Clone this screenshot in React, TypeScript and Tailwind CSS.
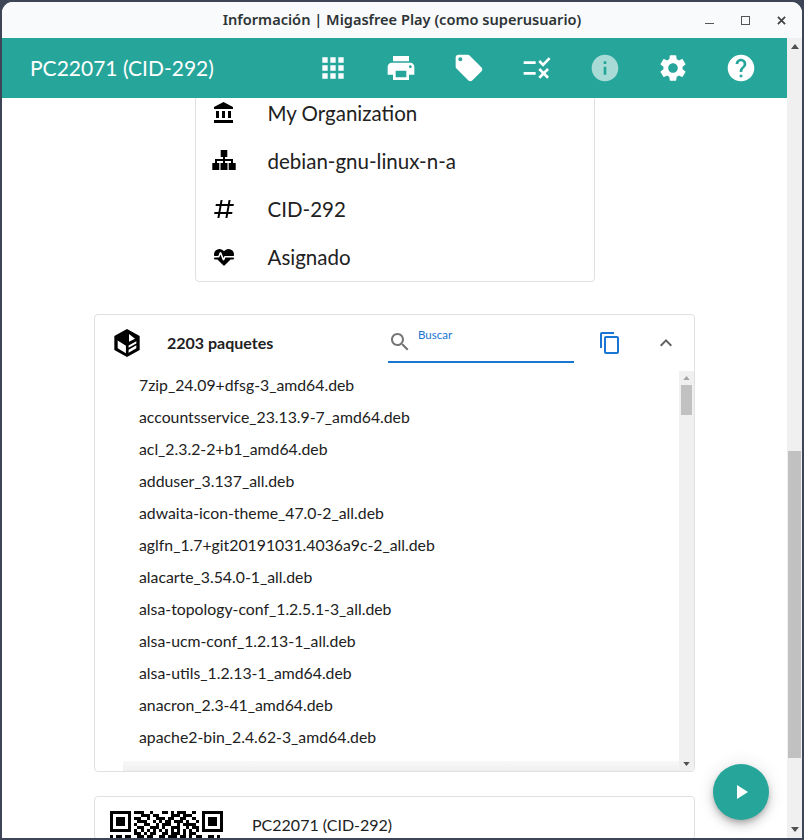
const paths = {
  apps: "M4 8h4V4H4v4zm6 12h4v-4h-4v4zm-6 0h4v-4H4v4zm0-6h4v-4H4v4zm6 0h4v-4h-4v4zm6-10v4h4V4h-4zm-6 4h4V4h-4v4zm6 6h4v-4h-4v4zm0 6h4v-4h-4v4z",
  print: "M19 8H5c-1.66 0-3 1.34-3 3v6h4v4h12v-4h4v-6c0-1.66-1.34-3-3-3zm-3 11H8v-5h8v5zm3-7c-.55 0-1-.45-1-1s.45-1 1-1 1 .45 1 1-.45 1-1 1zm-1-9H6v4h12V3z",
  tag: "M21.41 11.58l-9-9C12.05 2.22 11.55 2 11 2H4c-1.1 0-2 .9-2 2v7c0 .55.22 1.05.59 1.42l9 9c.36.36.86.58 1.41.58.55 0 1.05-.22 1.41-.59l7-7c.37-.36.59-.86.59-1.41 0-.55-.23-1.06-.59-1.42zM5.5 7C4.67 7 4 6.33 4 5.5S4.67 4 5.5 4 7 4.67 7 5.5 6.33 7 5.5 7z",
  rule: "M16.54 11L13 7.46l1.41-1.41 2.12 2.12 4.24-4.24 1.41 1.41L16.54 11zM11 7H2v2h9V7zm10 6.41L19.59 12 17 14.59 14.41 12 13 13.41 15.59 16 13 18.59 14.41 20 17 17.41 19.59 20 21 18.59 18.41 16 21 13.41zM11 15H2v2h9v-2z",
  info: "M12 2C6.48 2 2 6.48 2 12s4.48 10 10 10 10-4.48 10-10S17.52 2 12 2zm1 15h-2v-6h2v6zm0-8h-2V7h2v2z",
  settings: "M19.14 12.94c.04-.3.06-.61.06-.94 0-.32-.02-.64-.07-.94l2.03-1.58c.18-.14.23-.41.12-.61l-1.92-3.32c-.12-.22-.37-.29-.59-.22l-2.39.96c-.5-.38-1.03-.7-1.62-.94l-.36-2.54c-.04-.24-.24-.41-.48-.41h-3.84c-.24 0-.43.17-.47.41l-.36 2.54c-.59.24-1.13.57-1.62.94l-2.39-.96c-.22-.08-.47 0-.59.22L2.74 8.87c-.12.21-.08.47.12.61l2.03 1.58c-.05.3-.09.63-.09.94s.02.64.07.94l-2.03 1.58c-.18.14-.23.41-.12.61l1.92 3.32c.12.22.37.29.59.22l2.39-.96c.5.38 1.03.7 1.62.94l.36 2.54c.05.24.24.41.48.41h3.84c.24 0 .44-.17.47-.41l.36-2.54c.59-.24 1.13-.56 1.62-.94l2.39.96c.22.08.47 0 .59-.22l1.92-3.32c.12-.22.07-.47-.12-.61l-2.01-1.58zM12 15.6c-1.98 0-3.6-1.62-3.6-3.6s1.62-3.6 3.6-3.6 3.6 1.62 3.6 3.6-1.62 3.6-3.6 3.6z",
  help: "M12 2C6.48 2 2 6.48 2 12s4.48 10 10 10 10-4.48 10-10S17.52 2 12 2zm1 17h-2v-2h2v2zm2.07-7.75l-.9.92C13.45 12.9 13 13.5 13 15h-2v-.5c0-1.1.45-2.1 1.17-2.83l1.24-1.26c.37-.36.59-.86.59-1.41 0-1.1-.9-2-2-2s-2 .9-2 2H8c0-2.21 1.79-4 4-4s4 1.79 4 4c0 .88-.36 1.68-.93 2.25z",
  bank: "M4 10v7h3v-7H4zm6 0v7h3v-7h-3zM2 22h19v-3H2v3zm14-12v7h3v-7h-3zm-4.5-9L2 6v2h19V6l-9.5-5z",
  sitemap: "M8.7 1h6.6v7H8.7z M11 8h2v2h-2z M3 10h18v2H3z M3 12h2v2H3z M11 12h2v2h-2z M19 12h2v2h-2z M.3 14h7v7h-7z M8.5 14h7v7h-7z M16.7 14h7v7h-7z",
  hash: "M5.41 21L6.12 17H2.12L2.47 15H6.47L7.53 9H3.53L3.88 7H7.88L8.59 3H10.59L9.88 7H15.88L16.59 3H18.59L17.88 7H21.88L21.53 9H17.53L16.47 15H20.47L20.12 17H16.12L15.41 21H13.41L14.12 17H8.12L7.41 21H5.41M9.53 9L8.47 15H14.47L15.53 9H9.53Z",
  heart: "M7.5,4A5.5,5.5 0 0,0 2,9.5C2,10 2.09,10.5 2.22,11H6.3L7.57,7.63C7.87,6.83 9.05,6.75 9.43,7.63L11.5,13L12.09,11.58C12.22,11.25 12.57,11 13,11H21.78C21.91,10.5 22,10 22,9.5A5.5,5.5 0 0,0 16.5,4C14.64,4 13,4.93 12,6.34C11,4.93 9.36,4 7.5,4V4M3,12.5A1,1 0 0,0 2,13.5A1,1 0 0,0 3,14.5H5.44L11,20C12,20.9 12,20.9 13,20L18.56,14.5H21A1,1 0 0,0 22,13.5A1,1 0 0,0 21,12.5H13.4L12.47,14.8C12.07,15.81 10.92,15.67 10.55,14.83L8.5,9.5L7.54,11.83C7.39,12.21 7.05,12.5 6.6,12.5H3Z",
  box: "M12 1.5L21.5 6.8V17.2L12 22.5L2.5 17.2V6.8Z M13.5 5.3L18 8.8L13.5 11Z M5 10.2L11.2 14V19.6L5 16Z M13.2 13.8L19 10.6V12.3L13.2 15.5Z M13.2 17L19 13.7V16L13.2 19.4Z",
  search: "M15.5 14h-.79l-.28-.27C15.41 12.59 16 11.11 16 9.5 16 5.91 13.09 3 9.5 3S3 5.91 3 9.5 5.91 16 9.5 16c1.61 0 3.09-.59 4.23-1.57l.27.28v.79l5 4.99L20.49 19l-4.99-5zm-6 0C7.01 14 5 11.99 5 9.5S7.01 5 9.5 5 14 7.01 14 9.5 11.99 14 9.5 14z",
  copy: "M16 1H4c-1.1 0-2 .9-2 2v14h2V3h12V1zm3 4H8c-1.1 0-2 .9-2 2v14c0 1.1.9 2 2 2h11c1.1 0 2-.9 2-2V7c0-1.1-.9-2-2-2zm0 16H8V7h11v14z",
  expand: "M12 8l-6 6 1.41 1.41L12 10.83l4.59 4.58L18 14z",
  play: "M8 5v14l11-7z",
};

const packages = [
  "7zip_24.09+dfsg-3_amd64.deb",
  "accountsservice_23.13.9-7_amd64.deb",
  "acl_2.3.2-2+b1_amd64.deb",
  "adduser_3.137_all.deb",
  "adwaita-icon-theme_47.0-2_all.deb",
  "aglfn_1.7+git20191031.4036a9c-2_all.deb",
  "alacarte_3.54.0-1_all.deb",
  "alsa-topology-conf_1.2.5.1-3_all.deb",
  "alsa-ucm-conf_1.2.13-1_all.deb",
  "alsa-utils_1.2.13-1_amd64.deb",
  "anacron_2.3-41_amd64.deb",
  "apache2-bin_2.4.62-3_amd64.deb",
];

const info = [
  { icon: paths.bank, text: "My Organization" },
  { icon: paths.sitemap, text: "debian-gnu-linux-n-a" },
  { icon: paths.hash, text: "CID-292" },
  { icon: paths.heart, text: "Asignado" },
];

function Icon({ d, className }: { d: string; className?: string }) {
  return (
    <svg viewBox="0 0 24 24" fill="currentColor" fillRule="evenodd" className={className}>
      <path d={d} />
    </svg>
  );
}

function ScrollArrow({ up, className }: { up?: boolean; className?: string }) {
  return (
    <svg viewBox="0 0 8 5" fill="currentColor" className={className}>
      <path d={up ? "M4 0l4 5H0z" : "M4 5l4-5H0z"} />
    </svg>
  );
}

// only the top rows of the code are on screen
const qrRows = [
  "11111110111001000110101110010" + "01111111",
  "10000010001110110000111011100" + "01000001",
  "10111010110010011101100110010" + "01011101",
  "10111010011100101011011101001" + "01011101",
  "10111010100110010111001011110" + "01011101",
  "10000010011001110100111001011" + "01000001",
  "11111110101010101010101010101" + "01111111",
  "00000000110101100110111010110" + "00000000",
  "10110110011011001101110110101" + "10011010",
];

function QrCode() {
  return (
    <svg viewBox="0 0 37 9" shapeRendering="crispEdges" className="h-[27.5px] w-[113px] shrink-0">
      {qrRows.map((row, y) =>
        row.split("").map((c, x) =>
          c === "1" ? <rect key={`${x}-${y}`} x={x} y={y} width="1" height="1" fill="#000" /> : null
        )
      )}
    </svg>
  );
}

export default function App() {
  return (
    <div className="h-[840px] w-[804px] overflow-hidden bg-[#3d4556] px-[2px] pb-[2px] pt-[2px] font-['Lato',sans-serif]">
      <div className="relative flex h-full flex-col overflow-hidden rounded-t-[11px] bg-white">
        <div className="relative flex h-[36px] shrink-0 items-center justify-center bg-[#f9fafc] text-[14.6px] font-semibold text-[#2e3436] font-['Noto_Sans',sans-serif]">
          Información | Migasfree Play (como superusuario)
          <div className="absolute right-[16px] top-0 flex h-full items-center gap-[27px]">
            <div className="mt-[7px] h-px w-[9px] bg-[#555]" />
            <div className="h-[9px] w-[9px] border border-[#555]" />
            <svg viewBox="0 0 10 10" className="h-[9px] w-[9px]" stroke="#444" strokeWidth="2">
              <path d="M1 1l8 8M9 1l-8 8" />
            </svg>
          </div>
        </div>

        <div className="flex min-h-0 flex-1">
          <div className="flex min-w-0 flex-1 flex-col">
            <header className="flex h-[60px] shrink-0 items-center bg-[#26a69a] pl-[28px] text-white">
              <span className="text-[21px]">PC22071 (CID-292)</span>
              <nav className="ml-auto flex items-center gap-[36px] pr-[30px]">
                <Icon d={paths.apps} className="h-8 w-8" />
                <Icon d={paths.print} className="h-8 w-8" />
                <Icon d={paths.tag} className="h-8 w-8" />
                <Icon d={paths.rule} className="h-8 w-8" />
                <Icon d={paths.info} className="h-8 w-8 opacity-60" />
                <Icon d={paths.settings} className="h-8 w-8" />
                <Icon d={paths.help} className="h-8 w-8" />
              </nav>
            </header>

            <main className="min-h-0 flex-1 overflow-hidden">
              <div className="-mt-[10px] flex flex-col items-center">
                <section className="w-[400px] rounded border border-[#e0e0e0] text-[20.5px] text-[#212121]">
                  {info.map((row) => (
                    <div key={row.text} className="flex h-[48px] items-center pl-[16px]">
                      <Icon d={row.icon} className="h-6 w-6 text-black" />
                      <span className="ml-[32px]">{row.text}</span>
                    </div>
                  ))}
                </section>

                <section className="mt-[32px] w-[601px] rounded border border-[#e0e0e0] text-black">
                  <div className="flex h-[56px] items-center">
                    <Icon d={paths.box} className="ml-[16px] h-8 w-8" />
                    <span className="ml-[24px] w-[221px] text-[16px] font-bold text-[#212121]">2203 paquetes</span>
                    <div className="flex h-[40px] w-[186px] items-center border-b-2 border-[#1976d2] text-[#757575]">
                      <Icon d={paths.search} className="h-6 w-6" />
                      <span className="mb-[14px] ml-[6px] text-[11.5px] text-[#1976d2]">Buscar</span>
                    </div>
                    <Icon d={paths.copy} className="ml-[24px] h-6 w-6 text-[#1976d2]" />
                    <Icon d={paths.expand} className="ml-[32px] h-6 w-6 text-[#616161]" />
                  </div>

                  <div className="flex h-[400px]">
                    <div className="flex min-w-0 flex-1 flex-col pl-[28px]">
                      <div className="-mt-[2px] flex-1 overflow-hidden pl-[16px] text-[15.8px] text-[#212121]">
                        {packages.map((name) => (
                          <div key={name} className="flex h-[32px] items-center">{name}</div>
                        ))}
                      </div>
                      <div className="h-[10px] bg-gradient-to-b from-[#f8f8f8] to-[#f0f0f0]" />
                    </div>
                    <div className="flex w-[15px] flex-col items-center bg-[#f0f0f0]">
                      <ScrollArrow up className="mt-[5px] h-[4px] w-[7px] text-[#a3a3a3]" />
                      <div className="mt-[5px] h-[30px] w-[11px] bg-[#c1c1c1]" />
                      <ScrollArrow className="mb-[5px] mt-auto h-[4px] w-[7px] text-[#505050]" />
                    </div>
                  </div>
                </section>

                <section className="mt-[24px] flex w-[601px] items-start rounded border border-[#e0e0e0] pl-[15px] pt-[14px]">
                  <QrCode />
                  <span className="ml-[29px] text-[16px] leading-[28px] text-[#212121]">PC22071 (CID-292)</span>
                </section>
              </div>
            </main>
          </div>

          <div className="flex w-[15px] shrink-0 flex-col items-center bg-[#f0f0f0]">
            <ScrollArrow up className="mt-[6px] h-[5px] w-[8px] text-[#505050]" />
            <div className="mb-[69px] mt-auto h-[307px] w-[13px] bg-[#c1c1c1]" />
            <ScrollArrow className="mb-[6px] h-[5px] w-[8px] text-[#505050]" />
          </div>
        </div>

        <button className="absolute left-[711px] top-[762px] flex h-[56px] w-[56px] items-center justify-center rounded-full bg-[#26a69a] text-white shadow-[0_3px_5px_-1px_rgba(0,0,0,0.2),0_6px_10px_0_rgba(0,0,0,0.14),0_1px_18px_0_rgba(0,0,0,0.12)]">
          <Icon d={paths.play} className="h-6 w-6" />
        </button>
      </div>
    </div>
  );
}
